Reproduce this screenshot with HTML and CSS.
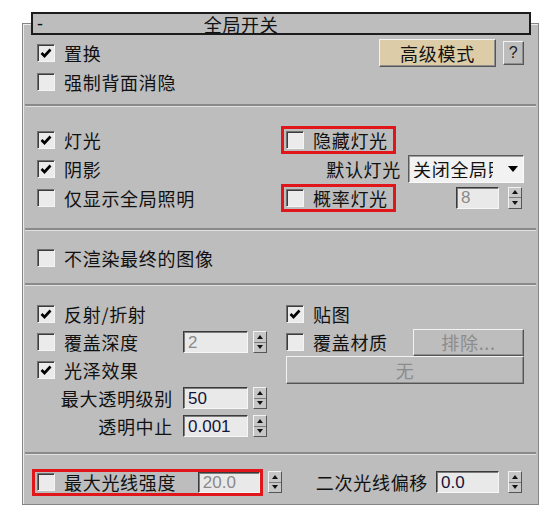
FILE: index.html
```html
<!DOCTYPE html>
<html>
<head>
  <meta charset="UTF-8">
  <title>全局开关</title>
  <link rel="stylesheet" href="styles.css">
</head>
<body>
  <div class="rollout">
    <!-- rollout title bar -->
    <div class="title"><span class="minus">-</span><span class="title-text">全局开关</span></div>

    <div class="panel">
      <!-- displacement / backface -->
      <div class="group g1">
        <div class="row">
          <label class="chk"><span class="box"><svg viewBox="0 0 12 10"><polyline points="1.5,5 4.5,8 10.5,1.5"/></svg></span>置换</label>
          <span class="btn tan">高级模式</span>
          <span class="btn help">?</span>
        </div>
        <div class="row">
          <label class="chk"><span class="box"></span>强制背面消隐</label>
        </div>
      </div>

      <!-- lights -->
      <div class="group g2 grid">
        <div class="cell"><label class="chk"><span class="box"><svg viewBox="0 0 12 10"><polyline points="1.5,5 4.5,8 10.5,1.5"/></svg></span>灯光</label></div>
        <div class="cell"><label class="chk red"><span class="box"></span>隐藏灯光</label></div>
        <div class="cell"><label class="chk"><span class="box"><svg viewBox="0 0 12 10"><polyline points="1.5,5 4.5,8 10.5,1.5"/></svg></span>阴影</label></div>
        <div class="cell end">
          <span class="lbl">默认灯光</span>
          <span class="combo"><span class="combo-text">关闭全局照明</span><span class="drop"></span></span>
        </div>
        <div class="cell"><label class="chk"><span class="box"></span>仅显示全局照明</label></div>
        <div class="cell">
          <label class="chk red"><span class="box"></span>概率灯光</label>
          <span class="field off f-prob">8</span>
          <span class="arrows a-right"><i class="up"></i><i class="dn"></i></span>
        </div>
      </div>

      <!-- final image -->
      <div class="group g3">
        <div class="row">
          <label class="chk"><span class="box"></span>不渲染最终的图像</label>
        </div>
      </div>

      <!-- materials -->
      <div class="group g4 grid">
        <div class="cell"><label class="chk"><span class="box"><svg viewBox="0 0 12 10"><polyline points="1.5,5 4.5,8 10.5,1.5"/></svg></span>反射/折射</label></div>
        <div class="cell"><label class="chk"><span class="box"><svg viewBox="0 0 12 10"><polyline points="1.5,5 4.5,8 10.5,1.5"/></svg></span>贴图</label></div>
        <div class="cell spin">
          <label class="chk"><span class="box"></span>覆盖深度</label>
          <span class="field off f-left">2</span>
          <span class="arrows"><i class="up"></i><i class="dn"></i></span>
        </div>
        <div class="cell">
          <label class="chk"><span class="box"></span>覆盖材质</label>
          <span class="btn off exclude">排除...</span>
        </div>
        <div class="cell"><label class="chk"><span class="box"><svg viewBox="0 0 12 10"><polyline points="1.5,5 4.5,8 10.5,1.5"/></svg></span>光泽效果</label></div>
        <div class="cell"><span class="btn off none">无</span></div>
        <div class="cell spin end">
          <span class="lbl">最大透明级别</span>
          <span class="field f-left">50</span>
          <span class="arrows"><i class="up"></i><i class="dn"></i></span>
        </div>
        <div class="cell"></div>
        <div class="cell spin end">
          <span class="lbl">透明中止</span>
          <span class="field f-left">0.001</span>
          <span class="arrows"><i class="up"></i><i class="dn"></i></span>
        </div>
        <div class="cell"></div>
      </div>

      <!-- ray intensity / bias -->
      <div class="group g5">
        <div class="row">
          <label class="chk red wide"><span class="box"></span>最大光线强度<span class="field off f-int">20.0</span></label>
          <span class="arrows a-int"><i class="up"></i><i class="dn"></i></span>
          <span class="lbl bias">二次光线偏移</span>
          <span class="field f-bias">0.0</span>
          <span class="arrows a-right"><i class="up"></i><i class="dn"></i></span>
        </div>
      </div>
    </div>
  </div>
</body>
</html>
```

FILE: styles.css
```css
* {
  box-sizing: border-box;
}
body {
  margin: 0;
  background: #fff;
  font-family: "Noto Sans CJK SC", "Liberation Sans", sans-serif;
  font-size: 18px;
  letter-spacing: 0.7px;
  line-height: 1;
  color: #111;
}
.rollout {
  width: 517px;
  margin: 12px 0 0 22px;
}
.title {
  position: relative;
  z-index: 1;
  display: flex;
  align-items: center;
  width: 500px;
  height: 23px;
  margin-left: 9px;
  border: 2px solid #1c1c1c;
  background: #bdbdbd;
}
.minus {
  margin-left: 4px;
  font-family: "Liberation Sans", sans-serif;
}
.title-text {
  margin-left: 160px;
}
.panel {
  margin-top: -12px;
  padding-top: 11px;
  height: 482px;
  background: #bdbdbd;
  border: 1px solid #858585;
  box-shadow: inset 1px 1px 0 #ececec;
}
.group {
  margin: 0 2px;
  padding: 0 12px 0 7px;
}
.group + .group {
  border-top: 2px solid #8a8a8a;
  box-shadow: inset 0 1px 0 #e0e0e0;
}
.row {
  display: flex;
  align-items: center;
  height: 28px;
}
.g1 {
  padding-top: 4px;
  padding-bottom: 8px;
}
.g1 .row + .row {
  margin-top: 1px;
}
.grid {
  display: grid;
  grid-template-columns: 249px 243px;
}
.g2 {
  grid-auto-rows: 29px;
  padding-top: 19px;
  padding-bottom: 16px;
}
.g3 {
  padding-top: 14px;
  padding-bottom: 11px;
}
.g4 {
  grid-auto-rows: 28px;
  padding-top: 15px;
  padding-bottom: 12px;
}
.g5 {
  padding-top: 14px;
}
.cell {
  display: flex;
  align-items: center;
}
.cell.end {
  justify-content: flex-end;
}
.cell.spin {
  padding-right: 14px;
}

/* checkbox + label */
.chk {
  display: inline-flex;
  align-items: center;
  height: 28px;
  padding: 0 4px 0 2px;
  border: 3px solid transparent;
}
.chk.red {
  width: 115px;
  border-color: #e0161b;
}
.chk.wide {
  width: 231px;
  height: 27px;
  padding-right: 0;
}
.box {
  display: inline-flex;
  align-items: center;
  justify-content: center;
  width: 18px;
  height: 18px;
  margin-right: 9px;
  background: #ebebeb;
  border: 1px solid;
  border-color: #707070 #f4f4f4 #f4f4f4 #707070;
  box-shadow: inset 1px 1px 0 #3c3c3c;
}
.box svg {
  width: 12px;
  height: 10px;
  fill: none;
  stroke: #000;
  stroke-width: 2.6;
}

/* buttons */
.btn {
  display: inline-flex;
  align-items: center;
  justify-content: center;
  height: 28px;
  background: #bdbdbd;
  border: 1px solid;
  border-color: #f2f2f2 #555 #555 #f2f2f2;
  box-shadow: inset -1px -1px 0 #8e8e8e;
}
.btn.tan {
  width: 117px;
  margin-left: auto;
  background: #dccca7;
}
.btn.help {
  width: 21px;
  height: 24px;
  margin-left: 7px;
  font-family: "Liberation Sans", sans-serif;
  font-size: 16px;
  color: #222;
}
.btn.off {
  color: #8c8c8c;
}
.btn.exclude {
  width: 111px;
  height: 27px;
  margin-left: auto;
}
.btn.none {
  width: 238px;
  margin-left: 5px;
}

/* labels, fields, spinners */
.lbl {
  white-space: nowrap;
}
.cell.end .lbl {
  margin-right: 10px;
}
.field {
  display: inline-flex;
  align-items: center;
  height: 22px;
  padding-left: 4px;
  font-family: "Liberation Sans", sans-serif;
  font-size: 17px;
  letter-spacing: 0;
  color: #14143a;
  background: #e9e9e9;
  border: 1px solid;
  border-color: #3a3a3a #f6f6f6 #f6f6f6 #3a3a3a;
  box-shadow: inset 1px 1px 0 #7c7c7c;
}
.field.off {
  color: #8a8a8a;
}
.f-left {
  width: 65px;
  margin-left: auto;
}
.cell.end .f-left {
  margin-left: 0;
}
.f-prob {
  width: 43px;
  margin-left: auto;
}
.f-int {
  width: 62px;
  height: 21px;
  margin-left: auto;
}
.f-bias {
  width: 63px;
  margin-left: 8px;
}
.bias {
  margin-left: 34px;
}
.arrows {
  display: inline-flex;
  flex-direction: column;
  width: 14px;
  height: 22px;
  margin-left: 5px;
  background: #c6c6c6;
  border: 1px solid;
  border-color: #f2f2f2 #555 #555 #f2f2f2;
}
.arrows i {
  flex: 1;
  display: flex;
  align-items: center;
  justify-content: center;
}
.arrows i::after {
  content: "";
  border-left: 3px solid transparent;
  border-right: 3px solid transparent;
}
.arrows .up::after {
  border-bottom: 4px solid #111;
}
.arrows .dn {
  border-top: 1px solid #7a7a7a;
}
.arrows .dn::after {
  border-top: 4px solid #111;
}
.a-right {
  margin-left: 9px;
  margin-right: 2px;
}
.a-int {
  margin-left: 5px;
}

/* default lights dropdown */
.combo {
  display: inline-flex;
  align-items: center;
  width: 116px;
  height: 28px;
  margin-left: -3px;
  background: #f2f2f2;
  border: 1px solid;
  border-color: #5a5a5a #fafafa #fafafa #5a5a5a;
  box-shadow: inset 1px 1px 0 #a0a0a0;
}
.combo-text {
  width: 80px;
  margin-left: 4px;
  overflow: hidden;
  white-space: nowrap;
}
.drop {
  margin-left: 15px;
  border-left: 5px solid transparent;
  border-right: 5px solid transparent;
  border-top: 6px solid #000;
}
```
